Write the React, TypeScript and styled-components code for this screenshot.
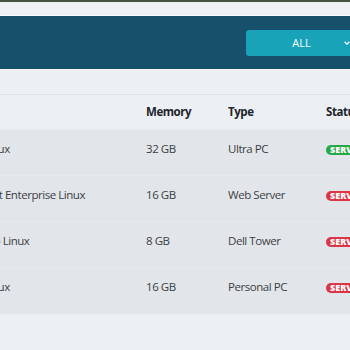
import styled, { createGlobalStyle } from "styled-components";

const GlobalStyle = createGlobalStyle`
  body {
    margin: 0;
    background: #eceff4;
    font-family: "Open Sans", "Liberation Sans", sans-serif;
    color: #3b3f44;
  }
`;

const Viewport = styled.div`
  width: 350px;
  height: 350px;
  overflow: hidden;
`;

// page is scrolled sideways, so shift the whole thing left
const Page = styled.div`
  width: 520px;
  margin-left: -60px;
`;

const TopStrip = styled.div`
  height: 13px;
  border-top: 2px solid #44523f;
  border-bottom: 1px solid #fafbfc;
  background: #edf0f4;
`;

const Header = styled.header`
  height: 53px;
  background: #17506b;
  display: flex;
  align-items: center;
  padding-left: 306px;
  border-bottom: 1px solid #f4f6f9;
`;

const Select = styled.div`
  width: 120px;
  height: 26px;
  border-radius: 3px;
  background: #18a3b8;
  color: #fff;
  display: flex;
  align-items: center;
  font-size: 11px;
`;

const SelectText = styled.span`
  flex: 1;
  padding-left: 14px;
  text-align: center;
`;

const Chevron = styled.svg`
  width: 8px;
  height: 8px;
  margin-right: 15px;
`;

const TableWrap = styled.div`
  margin-top: 24px;
`;

const Table = styled.table`
  width: 520px;
  table-layout: fixed;
  border-collapse: collapse;
  font-size: 11.5px;
  letter-spacing: -0.45px;
`;

const HeadCell = styled.th<{ w: number }>`
  width: ${(p) => p.w}px;
  height: 34px;
  box-sizing: border-box;
  padding: 10px 0 10px ${(p) => (p.w > 150 ? 23 : 0)}px;
  text-align: left;
  vertical-align: top;
  line-height: 14px;
  font-weight: 700;
  color: #212529;
  border-top: 1px solid #dfe2e6;
  white-space: nowrap;
`;

const Row = styled.tr`
  background: #e2e5e9;
  border-top: 1px solid #e8eaed;
`;

const Cell = styled.td<{ first?: boolean }>`
  height: 46px;
  box-sizing: border-box;
  padding: 12px 0 0 ${(p) => (p.first ? 23 : 0)}px;
  vertical-align: top;
  line-height: 14px;
  white-space: nowrap;
  overflow: hidden;
`;

const Badge = styled.span<{ ok: boolean }>`
  display: inline-block;
  vertical-align: top;
  margin-top: 3px;
  height: 10px;
  line-height: 10px;
  padding: 0 4px;
  border-radius: 6px;
  font-size: 9px;
  font-weight: 800;
  letter-spacing: 0;
  color: #fff;
  background: ${(p) => (p.ok ? "#28a745" : "#dc3545")};
`;

const servers = [
  { id: 1, name: "Kali Linux", memory: "32 GB", type: "Ultra PC", ok: true },
  { id: 2, name: "Red Hat Enterprise Linux", memory: "16 GB", type: "Web Server", ok: false },
  { id: 3, name: "Gentoo Linux", memory: "8 GB", type: "Dell Tower", ok: false },
  { id: 4, name: "Kali Linux", memory: "16 GB", type: "Personal PC", ok: false },
];

export default function App() {
  return (
    <Viewport>
      <GlobalStyle />
      <Page>
        <TopStrip />
        <Header>
          <Select>
            <SelectText>ALL</SelectText>
            <Chevron viewBox="0 0 10 10">
              <path d="M2 3.5 L5 6.5 L8 3.5" stroke="#fff" strokeWidth="1.6" fill="none" />
            </Chevron>
          </Select>
        </Header>
        <TableWrap>
          <Table>
            <thead>
              <tr>
                <HeadCell w={206}>Name</HeadCell>
                <HeadCell w={82}>Memory</HeadCell>
                <HeadCell w={98}>Type</HeadCell>
                <HeadCell w={134}>Status</HeadCell>
              </tr>
            </thead>
            <tbody>
              {servers.map((s) => (
                <Row key={s.id}>
                  <Cell first>{s.name}</Cell>
                  <Cell>{s.memory}</Cell>
                  <Cell>{s.type}</Cell>
                  <Cell>
                    <Badge ok={s.ok}>SERVER {s.ok ? "ONLINE" : "OFFLINE"}</Badge>
                  </Cell>
                </Row>
              ))}
            </tbody>
          </Table>
        </TableWrap>
      </Page>
    </Viewport>
  );
}
